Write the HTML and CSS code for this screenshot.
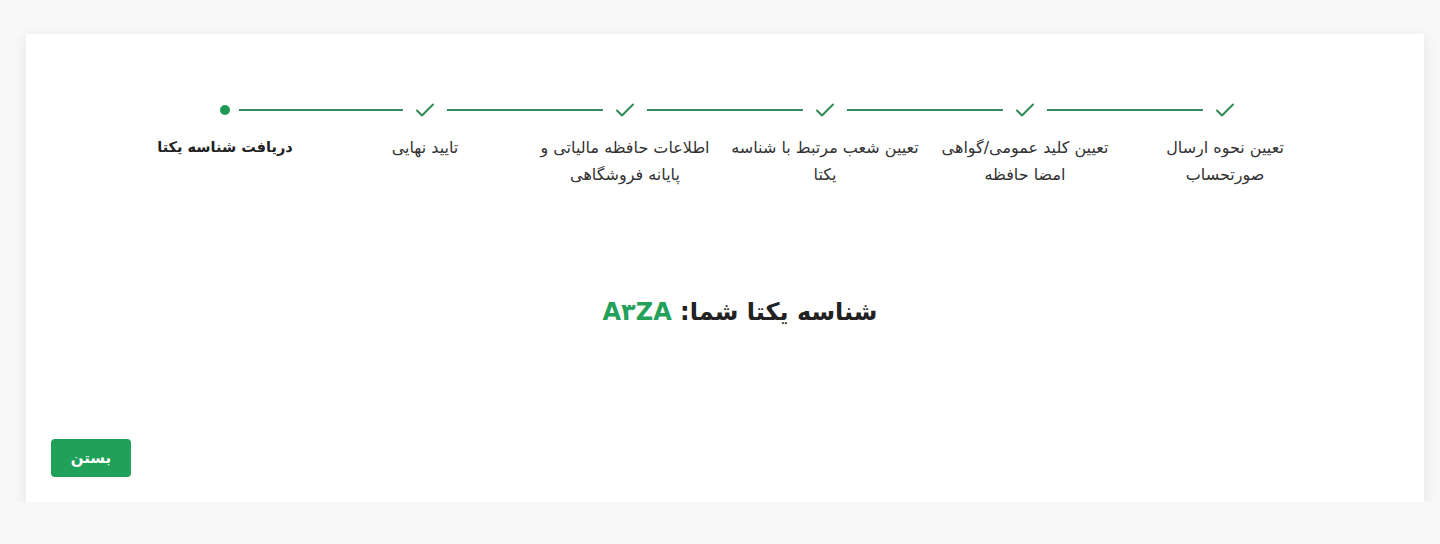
FILE: index.html
```html
<!DOCTYPE html>
<html lang="fa" dir="rtl">
<head>
<meta charset="utf-8">
<link rel="stylesheet" href="styles.css">
</head>
<body>
<div class="card">
  <ol class="steps">
    <li class="step done">
      <div class="marker"><svg class="check" viewBox="0 0 20 16" width="20" height="16"><path d="M2 8.5 L7 13.5 L18 2.5" fill="none" stroke="#2f8a55" stroke-width="2" stroke-linecap="round" stroke-linejoin="round"/></svg></div>
      <div class="label">تعیین نحوه ارسال صورتحساب</div>
    </li>
    <li class="step done">
      <div class="marker"><svg class="check" viewBox="0 0 20 16" width="20" height="16"><path d="M2 8.5 L7 13.5 L18 2.5" fill="none" stroke="#2f8a55" stroke-width="2" stroke-linecap="round" stroke-linejoin="round"/></svg></div>
      <div class="label">تعیین کلید عمومی/گواهی امضا حافظه</div>
    </li>
    <li class="step done">
      <div class="marker"><svg class="check" viewBox="0 0 20 16" width="20" height="16"><path d="M2 8.5 L7 13.5 L18 2.5" fill="none" stroke="#2f8a55" stroke-width="2" stroke-linecap="round" stroke-linejoin="round"/></svg></div>
      <div class="label">تعیین شعب مرتبط با شناسه یکتا</div>
    </li>
    <li class="step done">
      <div class="marker"><svg class="check" viewBox="0 0 20 16" width="20" height="16"><path d="M2 8.5 L7 13.5 L18 2.5" fill="none" stroke="#2f8a55" stroke-width="2" stroke-linecap="round" stroke-linejoin="round"/></svg></div>
      <div class="label">اطلاعات حافظه مالیاتی و پایانه فروشگاهی</div>
    </li>
    <li class="step done">
      <div class="marker"><svg class="check" viewBox="0 0 20 16" width="20" height="16"><path d="M2 8.5 L7 13.5 L18 2.5" fill="none" stroke="#2f8a55" stroke-width="2" stroke-linecap="round" stroke-linejoin="round"/></svg></div>
      <div class="label">تایید نهایی</div>
    </li>
    <li class="step current">
      <div class="marker"><span class="dot"></span></div>
      <div class="label">دریافت شناسه یکتا</div>
    </li>
  </ol>
  <h2 class="result">شناسه یکتا شما: <span class="code">A۳ZA</span></h2>
  <div class="actions">
    <button class="btn">بستن</button>
  </div>
</div>
</body>
</html>
```
FILE: styles.css
```css
* { box-sizing: border-box; }
html, body { margin: 0; padding: 0; }
body {
  background: #f7f8f7;
  font-family: "DejaVu Sans", "Noto Sans", sans-serif;
  color: #333;
  padding: 34px 16px 0 26px;
}
.card {
  background: #fff;
  width: 1398px;
  height: 468px;
  box-shadow: 0 4px 14px rgba(0,0,0,0.09);
  padding: 0 25px 25px;
  display: flex;
  flex-direction: column;
}
.steps {
  list-style: none;
  margin: 0;
  padding: 66px 0 0;
  display: flex;
  justify-content: center;
}
.step {
  width: 200px;
  display: flex;
  flex-direction: column;
  align-items: center;
  position: relative;
}
.step + .step::before {
  content: "";
  position: absolute;
  top: 9px;
  right: -78px;
  width: 156px;
  height: 2px;
  background: #3a8a5e;
}
.step.current::before { width: 164px; }
.marker {
  height: 20px;
  display: flex;
  align-items: center;
  justify-content: center;
}
.check { display: block; }
.dot {
  width: 10px;
  height: 10px;
  border-radius: 50%;
  background: #1f9a55;
}
.label {
  margin-top: 14px;
  font-size: 16px;
  line-height: 27px;
  text-align: center;
  color: #333;
  padding: 0 2px;
}
.current .label { font-size: 14.5px; font-weight: bold; color: #222; }
.result {
  margin: 110px 0 0;
  padding-left: 30px;
  text-align: center;
  font-size: 24px;
  font-weight: bold;
  color: #222;
}
.code { color: #23a05a; }
.actions {
  margin-top: auto;
  display: flex;
  justify-content: flex-end;
}
.btn {
  width: 80px;
  height: 38px;
  border: 0;
  border-radius: 4px;
  background: #21a05a;
  color: #fff;
  font-family: inherit;
  font-size: 15px;
  font-weight: bold;
}
```
